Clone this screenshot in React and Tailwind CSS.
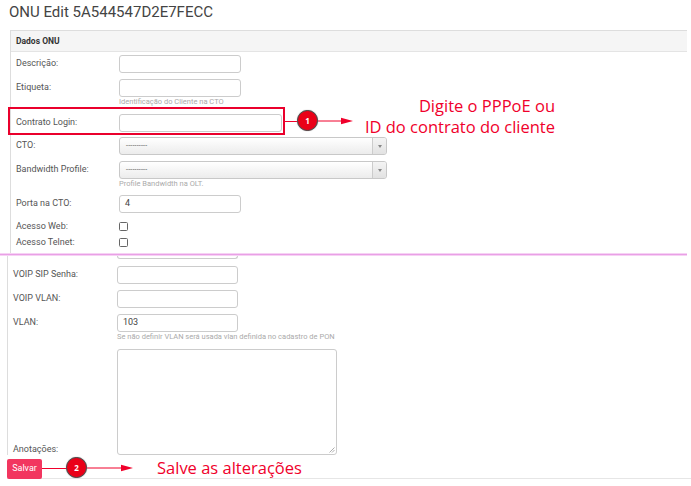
import clsx from "clsx";

const RED = "#f0002b";

function Input({ className, value }) {
  return (
    <div
      className={clsx(
        "h-[18px] border border-[#ccc] rounded-[3px] bg-white flex items-center px-[5px] text-[9px] text-[#444]",
        className
      )}
    >
      {value}
    </div>
  );
}

function Select() {
  return (
    <div className="w-[268px] h-[18px] border border-[#c8c8c8] rounded-[3px] bg-linear-to-b from-white to-[#ececec] flex items-center overflow-hidden">
      <span className="flex-1 pl-[6px] text-[7px] leading-none text-[#555] tracking-[0.2px]">
        ----------
      </span>
      <div className="w-[14px] h-full border-l border-[#ccc] bg-linear-to-b from-[#f4f4f4] to-[#e2e2e2] flex items-center justify-center">
        <div className="w-0 h-0 border-l-[2.5px] border-r-[2.5px] border-t-[3px] border-l-transparent border-r-transparent border-t-[#888]" />
      </div>
    </div>
  );
}

function Checkbox() {
  return <div className="w-[9px] h-[9px] border border-[#666] rounded-[1.5px] bg-white" />;
}

function Help({ children }) {
  return <div className="text-[7.5px] leading-[9px] text-[#aaa]">{children}</div>;
}

function Row({ label, className, labelWidth = "w-[103px]", children }) {
  return (
    <div className={clsx("flex items-start", className)}>
      <div className={clsx(labelWidth, "h-[18px] flex items-center text-[9px] text-[#555] shrink-0")}>
        {label}
      </div>
      <div className="flex flex-col">{children}</div>
    </div>
  );
}

function Badge({ n }) {
  return (
    <div className="w-[21px] h-[21px] rounded-full bg-[#ea0018] border-[1.5px] border-[#4a4a4a] shadow-[0_0_1px_#777] flex items-center justify-center text-white text-[8px] font-bold font-['Open_Sans',sans-serif]">
      {n}
    </div>
  );
}

function Arrow({ width }) {
  return (
    <svg width={width} height="8" viewBox={`0 0 ${width} 8`} className="block">
      <line x1="0" y1="4" x2={width - 10} y2="4" stroke={RED} strokeWidth="1" />
      <polygon points={`${width - 12},0.8 ${width},4 ${width - 12},7.2`} fill={RED} />
    </svg>
  );
}

export default function App() {
  return (
    <div className="relative w-[691px] h-[486px] bg-white overflow-hidden font-['Roboto',sans-serif] text-[#555]">
      {/* upper screenshot */}
      <div className="w-[687px] h-[253px] pl-[10px] flex flex-col">
        <h1 className="h-[30px] -ml-[1px] pt-[2px] text-[15px] leading-[20px] text-[#444] font-normal">
          ONU Edit 5A544547D2E7FECC
        </h1>
        <div className="flex-1 border-l border-t border-[#ddd] flex flex-col">
          <div className="h-[21px] shrink-0 bg-[#f5f5f5] border-b border-[#e4e4e4] flex items-center px-[5px] text-[8.5px] font-bold text-[#333]">
            Dados ONU
          </div>
          <div className="pl-[5px] pt-[3px] flex flex-col">
            <Row label="Descrição:">
              <Input className="w-[122px]" />
            </Row>
            <Row label="Etiqueta:" className="mt-[6px]">
              <Input className="w-[122px]" />
              <Help>Identificação do Cliente na CTO</Help>
            </Row>
            <Row label="Contrato Login:" className="mt-[8px]">
              <Input className="w-[163px]" />
            </Row>
            <Row label="CTO:" className="mt-[5px]">
              <Select />
            </Row>
            <Row label="Bandwidth Profile:" className="mt-[6px]">
              <Select />
              <Help>Profile Bandwidth na OLT.</Help>
            </Row>
            <Row label="Porta na CTO:" className="mt-[7px]">
              <Input className="w-[122px]" value="4" />
            </Row>
            <div className="mt-[7px] h-[12px] flex items-center">
              <div className="w-[103px] text-[9px] pt-[1px]">Acesso Web:</div>
              <Checkbox />
            </div>
            <div className="mt-[4px] h-[12px] flex items-center">
              <div className="w-[103px] text-[9px] pt-[1px]">Acesso Telnet:</div>
              <Checkbox />
            </div>
          </div>
        </div>
      </div>

      {/* seam between the two captures */}
      <div className="w-[687px] flex flex-col">
        <div className="h-[1px] bg-[#f6d2f4]" />
        <div className="h-[1px] bg-[#e9a0e6]" />
        <div className="h-[1px] bg-[#f6d2f4]" />
      </div>

      {/* lower screenshot */}
      <div className="pl-[7px] flex flex-col">
        <div className="border-l border-[#ddd] pl-[5px] flex flex-col">
          <div className="ml-[104px] w-[121px] h-[3px] border-x border-b border-[#ccc] rounded-b-[3px]" />
          <Row label="VOIP SIP Senha:" labelWidth="w-[104px]" className="mt-[7px]">
            <Input className="w-[121px]" />
          </Row>
          <Row label="VOIP VLAN:" labelWidth="w-[104px]" className="mt-[6px]">
            <Input className="w-[121px]" />
          </Row>
          <Row label="VLAN:" labelWidth="w-[104px]" className="mt-[6px]">
            <Input className="w-[121px]" value="103" />
            <Help>Se não definir VLAN será usada vlan definida no cadastro de PON</Help>
          </Row>
          <div className="mt-[8px] flex items-end">
            <div className="w-[104px] text-[9px] leading-[10px] mb-[1px]">Anotações:</div>
            <div className="relative w-[220px] h-[106px] border border-[#ccc] rounded-[3px]">
              <svg width="6" height="6" className="absolute right-[1px] bottom-[1px]">
                <line x1="0.5" y1="5.5" x2="5.5" y2="0.5" stroke="#999" strokeWidth="0.8" />
                <line x1="3" y1="5.5" x2="5.5" y2="3" stroke="#999" strokeWidth="0.8" />
              </svg>
            </div>
          </div>
        </div>
        <div className="mt-[4px] h-[20px] border-b border-[#e6e6e6] flex">
          <button className="h-[20px] w-[35px] rounded-[2px] bg-[#f2365f] text-white text-[9px] flex items-center justify-center">
            Salvar
          </button>
        </div>
      </div>

      {/* annotations */}
      <div className="absolute left-[8px] top-[107px] w-[277px] h-[28px] border-2 border-[#ea002c]" />
      <div className="absolute left-[285px] top-[121px] w-[12px] h-[1px] bg-[#f0002b]" />
      <div className="absolute left-[297px] top-[110px]">
        <Badge n="1" />
      </div>
      <div className="absolute left-[318px] top-[117px]">
        <Arrow width={35} />
      </div>
      <div className="absolute right-[136px] top-[95px] text-right text-[16.5px] leading-[21px] text-[#f0002b] font-['Open_Sans',sans-serif]">
        <div>Digite o PPPoE ou</div>
        <div>ID do contrato do cliente</div>
      </div>

      <div className="absolute left-[42px] top-[468px] w-[25px] h-[1px] bg-[#f0002b]" />
      <div className="absolute left-[66px] top-[457px]">
        <Badge n="2" />
      </div>
      <div className="absolute left-[87px] top-[464px]">
        <Arrow width={46} />
      </div>
      <div className="absolute left-[157px] top-[456px] text-[16.5px] leading-[24px] text-[#f0002b] font-['Open_Sans',sans-serif]">
        Salve as alterações
      </div>
    </div>
  );
}
